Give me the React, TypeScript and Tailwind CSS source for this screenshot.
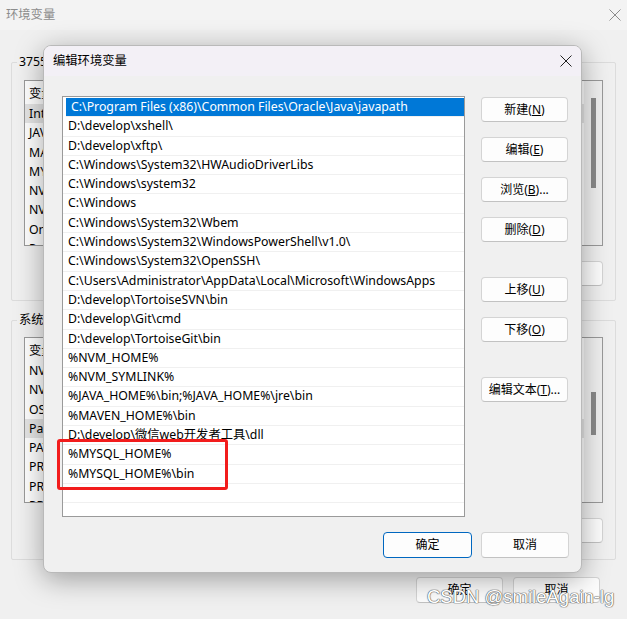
const UI = "font-['Noto_Sans','Noto_Sans_CJK_SC',sans-serif]"

const userVars = ['变量', 'IntelliJ IDEA', 'JAVA_HOME', 'MAVEN_HOME', 'MYSQL_HOME', 'NVM_HOME', 'NVM_SYMLINK', 'OneDrive', 'Path']
const sysVars = ['变量', 'NVM_HOME', 'NVM_SYMLINK', 'OS', 'Path', 'PATHEXT', 'PROCESSOR_ARCHITECTURE', 'PROCESSOR_IDENTIFIER', 'PROCESSOR_LEVEL']

const paths = [
  'C:\\Program Files (x86)\\Common Files\\Oracle\\Java\\javapath',
  'D:\\develop\\xshell\\',
  'D:\\develop\\xftp\\',
  'C:\\Windows\\System32\\HWAudioDriverLibs',
  'C:\\Windows\\system32',
  'C:\\Windows',
  'C:\\Windows\\System32\\Wbem',
  'C:\\Windows\\System32\\WindowsPowerShell\\v1.0\\',
  'C:\\Windows\\System32\\OpenSSH\\',
  'C:\\Users\\Administrator\\AppData\\Local\\Microsoft\\WindowsApps',
  'D:\\develop\\TortoiseSVN\\bin',
  'D:\\develop\\Git\\cmd',
  'D:\\develop\\TortoiseGit\\bin',
  '%NVM_HOME%',
  '%NVM_SYMLINK%',
  '%JAVA_HOME%\\bin;%JAVA_HOME%\\jre\\bin',
  '%MAVEN_HOME%\\bin',
  'D:\\develop\\微信web开发者工具\\dll',
  '%MYSQL_HOME%',
  '%MYSQL_HOME%\\bin',
  '',
]

function CloseX({ color }: { color: string }) {
  return (
    <svg width="12" height="12" viewBox="0 0 12 12" fill="none" stroke={color} strokeWidth="1">
      <path d="M0.5 0.5L11.5 11.5M11.5 0.5L0.5 11.5" />
    </svg>
  )
}

function VarList({ rows, active, thumbTop, thumbH }: { rows: string[]; active: number; thumbTop: string; thumbH: string }) {
  return (
    <div className="mx-[12px] h-[166px] border border-[#9a9a9a] bg-white flex overflow-hidden">
      <div className="flex-1 flex flex-col pt-[2px]">
        {rows.map((r, i) => (
          <div
            key={i}
            className={`shrink-0 pl-[4px] text-[12.3px] leading-[19.3px] h-[19.3px] whitespace-nowrap text-black ${i === 0 ? 'h-[21px] leading-[21px]' : ''} ${i === active ? 'bg-[#e5e5e5]' : ''}`}
          >
            {r}
          </div>
        ))}
      </div>
      <div className="w-[18px] bg-[#f0f0f0] flex justify-center">
        <div className={`w-[5px] bg-[#8a8a8a] ${thumbTop} ${thumbH}`} />
      </div>
    </div>
  )
}

function GroupBox({ label, children }: { label: string; children: React.ReactNode }) {
  return (
    <div className="relative mx-[11px] border border-[#dcdcdc] rounded-[2px]">
      <span className="absolute -top-[10px] left-[5px] px-[2px] bg-[#f0f0f0] text-[12.3px] text-black leading-[18px]">{label}</span>
      {children}
    </div>
  )
}

function Btn({ children, className = '' }: { children: React.ReactNode; className?: string }) {
  return (
    <div
      className={`h-[25px] w-[87px] flex items-center justify-center rounded-[4px] bg-[#fdfdfd] border border-[#d4d4d4] border-b-[#c2c2c2] text-[12px] text-black ${className}`}
    >
      {children}
    </div>
  )
}

export default function App() {
  return (
    <div className={`${UI} relative w-[627px] h-[619px] overflow-hidden bg-[#f0f0f0]`}>
      {/* background window */}
      <div className="h-[30px] flex items-center justify-between pl-[6px] pr-[6px] bg-[#f3f3f3]">
        <span className="text-[12.3px] text-[#8c8c8c]">环境变量</span>
        <CloseX color="#8c8c8c" />
      </div>

      <div className="pt-[32px]">
        <GroupBox label="37559 的用户变量(U)">
          <div className="pt-[17px] pb-[14px]">
            <VarList rows={userVars} active={1} thumbTop="mt-[17px]" thumbH="h-[90px]" />
            <div className="flex justify-end mr-[12px] mt-[15px]">
              <Btn>删除(D)</Btn>
            </div>
          </div>
        </GroupBox>

        <div className="h-[19px]" />

        <GroupBox label="系统变量(S)">
          <div className="pt-[16px] pb-[16px]">
            <VarList rows={sysVars} active={4} thumbTop="mt-[54px]" thumbH="h-[43px]" />
            <div className="flex justify-end mr-[12px] mt-[15px]">
              <Btn>删除(L)</Btn>
            </div>
          </div>
        </GroupBox>

        <div className="flex justify-end gap-[10px] mr-[27px] mt-[17px]">
          <Btn className="h-[26px]">确定</Btn>
          <Btn className="h-[26px]">取消</Btn>
        </div>
      </div>

      {/* edit dialog */}
      <div className="absolute left-[43px] top-[45px] w-[539px] h-[528px] rounded-[8px] bg-[#f0f0f0] border border-[#b9b9b9] shadow-[0_6px_28px_rgba(0,0,0,0.35)] flex flex-col overflow-hidden">
        <div className="h-[30px] shrink-0 flex items-center justify-between pl-[9px] pr-[9px] bg-[#f3f0f6]">
          <span className="text-[12.3px] text-black">编辑环境变量</span>
          <CloseX color="#222" />
        </div>

        <div className="flex pt-[20px] pl-[18px]">
          <div className="w-[403px] h-[421px] border border-[#9a9a9a] bg-white flex flex-col">
            {paths.map((p, i) => (
              <div
                key={i}
                className={`shrink-0 h-[19.3px] leading-[18px] border-b border-[#f0f0f0] whitespace-nowrap pl-[5px] text-[12.3px] ${i === 0 ? 'bg-[#0078d7] text-white ml-[3px] pl-[2px] mt-[1px]' : 'text-black'}`}
              >
                {p}
              </div>
            ))}
          </div>

          <div className="ml-[16px] flex flex-col">
            <Btn className="mt-[1px]">新建(<span className="underline">N</span>)</Btn>
            <Btn className="mt-[15px]">编辑(<span className="underline">E</span>)</Btn>
            <Btn className="mt-[15px]">浏览(<span className="underline">B</span>)...</Btn>
            <Btn className="mt-[15px]">删除(<span className="underline">D</span>)</Btn>
            <Btn className="mt-[35px]">上移(<span className="underline">U</span>)</Btn>
            <Btn className="mt-[15px]">下移(<span className="underline">O</span>)</Btn>
            <Btn className="mt-[35px]">编辑文本(<span className="underline">T</span>)...</Btn>
          </div>
        </div>

        <div className="flex justify-end gap-[9px] pr-[12px] mt-[15px]">
          <div className="h-[26px] w-[89px] flex items-center justify-center rounded-[4px] bg-[#fdfdfd] border border-[#0067c0] text-[12px] text-black">确定</div>
          <div className="h-[26px] w-[88px] flex items-center justify-center rounded-[4px] bg-[#fdfdfd] border border-[#d4d4d4] border-b-[#c2c2c2] text-[12px] text-black">取消</div>
        </div>
      </div>

      {/* red highlight */}
      <div className="absolute left-[57px] top-[439px] w-[171px] h-[51px] border-[3px] border-[#f21c1c] rounded-[3px]" />

      {/* watermark */}
      <div className="absolute left-[427px] top-[585px] text-[18.5px] leading-[24px] text-white font-['Liberation_Sans',sans-serif] [text-shadow:0_0_1px_#555,0_0_1px_#555,0_0_1px_#555]">
        CSDN @smileAgain-lg
      </div>
    </div>
  )
}
